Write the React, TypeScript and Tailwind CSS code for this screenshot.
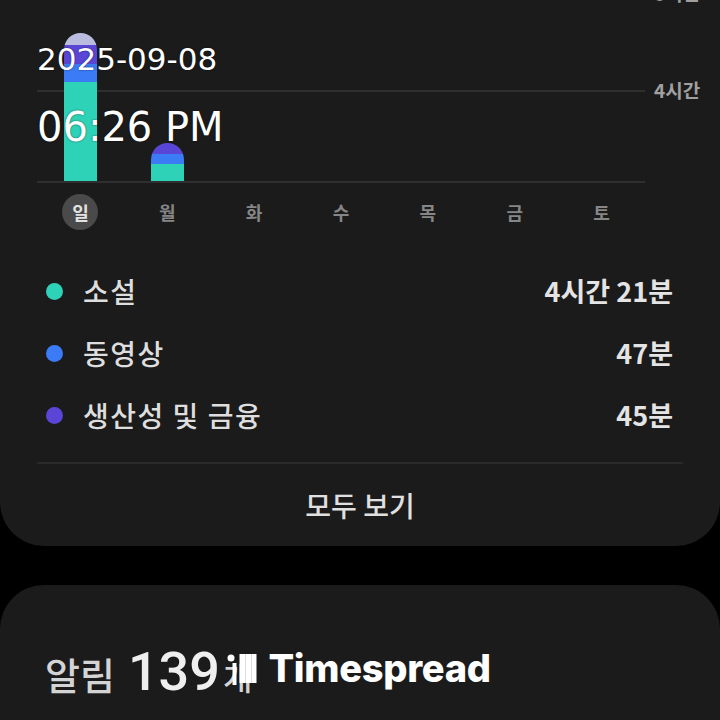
import React from "react";

type Seg = { h: number; c: string };

const bars: Seg[][] = [
  [
    { h: 12, c: "bg-[#b9bcdf]" },
    { h: 19, c: "bg-[#5a46d6]" },
    { h: 18, c: "bg-[#3b7bf5]" },
    { h: 99, c: "bg-[#2ed3b7]" },
  ],
  [
    { h: 11, c: "bg-[#5a46d6]" },
    { h: 10, c: "bg-[#3b7bf5]" },
    { h: 17, c: "bg-[#2ed3b7]" },
  ],
  [],
  [],
  [],
  [],
  [],
];

const days = ["일", "월", "화", "수", "목", "금", "토"];

const rows = [
  { dot: "bg-[#2ed3b7]", label: "소설", value: "4시간 21분" },
  { dot: "bg-[#3b7bf5]", label: "동영상", value: "47분" },
  { dot: "bg-[#5a46d6]", label: "생산성 및 금융", value: "45분" },
];

export default function App() {
  return (
    <div className="w-[720px] h-[720px] overflow-hidden bg-black font-['Noto_Sans_CJK_KR','Noto_Sans',sans-serif]">
      {/* Card 1 */}
      <div className="relative -mt-[40px] pt-[37px] bg-[#1b1b1b] rounded-b-[44px]">
        <div className="flex pl-[37px]">
          <div className="relative shrink-0 w-[608px] h-[186px] flex flex-col">
            <div className="h-[93px] border-t-2 border-[#2f2f2f]" />
            <div className="h-[93px] border-y-2 border-[#2f2f2f]" />
            <div className="absolute inset-x-0 top-0 bottom-[2px] grid grid-cols-7 items-end justify-items-center">
              {bars.map((segs, i) => (
                <div key={i} className="w-[33px] flex flex-col rounded-t-full overflow-hidden">
                  {segs.map((s, j) => (
                    <div key={j} className={s.c} style={{ height: s.h }} />
                  ))}
                </div>
              ))}
            </div>
          </div>
          <div className="relative shrink-0 w-[62px] ml-[9px] text-[19px] leading-[22px] font-bold text-[#a0a0a0]">
            <div className="absolute left-0 -top-[15px]">8시간</div>
            <div className="absolute left-0 top-[82px]">4시간</div>
          </div>
        </div>

        <div className="grid grid-cols-7 w-[608px] ml-[37px] h-[58px] items-center justify-items-center">
          {days.map((d, i) =>
            i === 0 ? (
              <div
                key={d}
                className="w-[36px] h-[36px] rounded-full bg-[#4a4a4a] flex items-center justify-center text-[18px] font-bold text-[#e2e2e2]"
              >
                {d}
              </div>
            ) : (
              <div key={d} className="text-[18px] font-bold text-[#868686]">
                {d}
              </div>
            )
          )}
        </div>

        <div className="mx-[37px] mt-[19px]">
          {rows.map((r) => (
            <div key={r.label} className="h-[62px] flex items-center pl-[9px] pr-[10px]">
              <div className={`w-[17px] h-[17px] rounded-full ${r.dot}`} />
              <div className="ml-[20px] text-[28px] tracking-[1.5px] font-medium text-[#dedede]">{r.label}</div>
              <div className="ml-auto text-[27px] font-bold text-[#e4e4e4]">{r.value}</div>
            </div>
          ))}
        </div>

        <div className="mx-[37px] mt-[16px] h-[2px] bg-[#2a2a2a]" />
        <div className="h-[82px] flex items-center justify-center text-[28px] font-medium text-[#e0e0e0]">
          모두 보기
        </div>

        {/* Date/time overlay */}
        <div className="absolute left-[37px] top-[84px] flex flex-col text-white font-['DejaVu_Sans',sans-serif] [text-shadow:0_0_2px_rgba(0,0,0,0.6)]">
          <div className="text-[31px] leading-none">2025-09-08</div>
          <div className="text-[40px] leading-none mt-[32px]">06:26 PM</div>
        </div>
      </div>

      {/* Card 2 */}
      <div className="mt-[39px] bg-[#1b1b1b] rounded-t-[44px] h-[200px] pt-[60px] pl-[45px]">
        <div className="flex items-baseline leading-none">
          <span className="text-[38px] font-medium text-[#d4d4d4] mr-[13px]">알림</span>
          <span className="text-[54px] font-medium text-[#efefef] font-['Roboto',sans-serif]">139</span>
          <span className="relative text-[32px] font-medium text-[#d4d4d4] ml-[3px]">
            개
            <svg
              className="absolute left-[4px] top-[-8px]"
              width="32"
              height="36"
              viewBox="0 0 32 36"
            >
              <circle cx="4" cy="6" r="3.5" fill="#ffffff" />
              <rect x="5.5" y="11" width="4" height="22" fill="#ffffff" />
              <rect x="12.5" y="2" width="17" height="29" fill="#ffffff" />
              <rect x="18" y="2" width="1" height="29" fill="#dcdcdc" />
              <rect x="24" y="2" width="1" height="29" fill="#dcdcdc" />
            </svg>
          </span>
          <span className="relative -top-[8px] ml-[16px] text-[38px] font-extrabold text-white font-['Inter',sans-serif] tracking-[-0.3px]">
            Timespread
          </span>
        </div>
      </div>
    </div>
  );
}
